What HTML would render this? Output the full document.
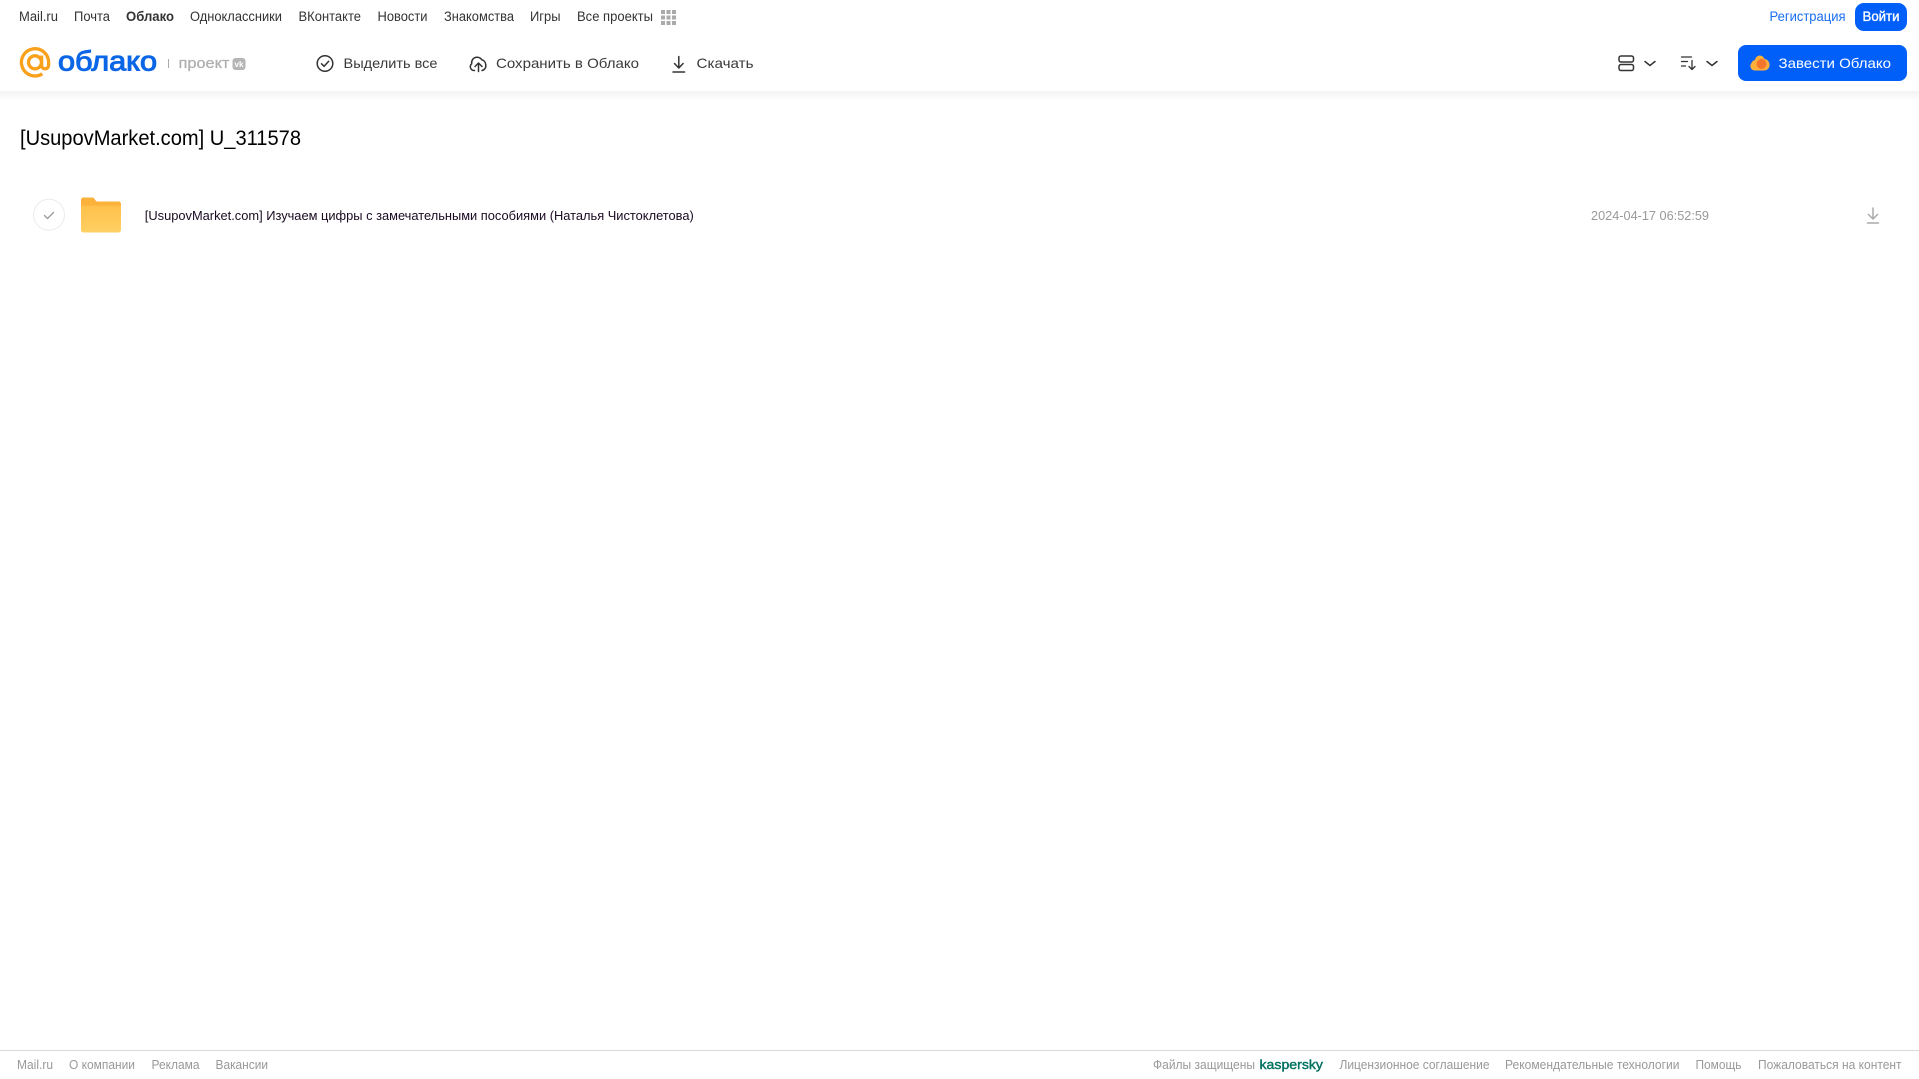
<!DOCTYPE html>
<html lang="ru">
<head>
<meta charset="utf-8">
<title>[UsupovMarket.com] U_311578</title>
<style>
html,body{margin:0;padding:0;background:#fff;width:1919px;height:1079px;overflow:hidden}
svg{display:block}
text{font-family:"Liberation Sans",sans-serif}
.n{font-size:13.500px;fill:#333}
.a{font-size:14px;fill:#3a3a3a}
.f{font-size:12.500px;fill:#999}
</style>
</head>
<body>
<svg width="1919" height="1079" viewBox="0 0 1919 1079" xmlns="http://www.w3.org/2000/svg">
<defs>
<linearGradient id="sh" x1="0" y1="0" x2="0" y2="1"><stop offset="0" stop-color="#f3f3f3"/><stop offset="1" stop-color="#fff"/></linearGradient>
<linearGradient id="fo" x1="0" y1="0" x2="0" y2="1"><stop offset="0" stop-color="#ffbb42"/><stop offset="1" stop-color="#ffd064"/></linearGradient>
</defs>
<rect x="0" y="91" width="1919" height="10" fill="url(#sh)"/>

<!-- top nav -->
<text class="n" x="19" y="21" textLength="39" lengthAdjust="spacingAndGlyphs">Mail.ru</text>
<text class="n" x="74" y="21" textLength="36" lengthAdjust="spacingAndGlyphs">Почта</text>
<text class="n" x="126" y="21" textLength="48" lengthAdjust="spacingAndGlyphs" font-weight="700">Облако</text>
<text class="n" x="190" y="21" textLength="92" lengthAdjust="spacingAndGlyphs">Одноклассники</text>
<text class="n" x="298.500" y="21" textLength="62.500" lengthAdjust="spacingAndGlyphs">ВКонтакте</text>
<text class="n" x="377.500" y="21" textLength="50" lengthAdjust="spacingAndGlyphs">Новости</text>
<text class="n" x="444" y="21" textLength="70" lengthAdjust="spacingAndGlyphs">Знакомства</text>
<text class="n" x="530" y="21" textLength="30.500" lengthAdjust="spacingAndGlyphs">Игры</text>
<text class="n" x="577" y="21" textLength="76" lengthAdjust="spacingAndGlyphs">Все проекты</text>
<g fill="#aaa">
<rect x="661" y="10" width="4" height="4"/><rect x="666.500" y="10" width="4" height="4"/><rect x="672" y="10" width="4" height="4"/>
<rect x="661" y="15.500" width="4" height="4"/><rect x="666.500" y="15.500" width="4" height="4"/><rect x="672" y="15.500" width="4" height="4"/>
<rect x="661" y="21" width="4" height="4"/><rect x="666.500" y="21" width="4" height="4"/><rect x="672" y="21" width="4" height="4"/>
</g>

<text class="n" x="1769.500" y="21" textLength="76" lengthAdjust="spacingAndGlyphs" style="fill:#1a6ff0">Регистрация</text>
<rect x="1855" y="3" width="52" height="28" rx="9" fill="#005ff9"/>
<text class="n" x="1862.500" y="21" textLength="37" lengthAdjust="spacingAndGlyphs" stroke="#fff" stroke-width=".35" style="fill:#fff">Войти</text>

<!-- logo -->
<g fill="none" stroke="#f9a11b" stroke-width="3.300">
<circle cx="35" cy="62.300" r="6.500"/>
<path d="M41.600 55.500v9.800a3.500 3.500 0 0 0 7 0V62.300a13.600 13.600 0 1 0-6.300 11.500"/>
</g>
<text x="58" y="70.500" font-size="28" fill="#0a66e6" stroke="#0a66e6" stroke-width="1" textLength="99" lengthAdjust="spacingAndGlyphs">облако</text>
<rect x="168" y="59" width="1" height="9" fill="#aaa"/>
<text x="178.500" y="68" font-size="15" fill="#b0b0b0" stroke="#b0b0b0" stroke-width=".3" textLength="51" lengthAdjust="spacingAndGlyphs">проект</text>
<rect x="232.500" y="58" width="13" height="12" rx="3" fill="#b5b5b5"/>
<text x="234.500" y="67" font-size="8" font-weight="700" fill="#fff" textLength="9" lengthAdjust="spacingAndGlyphs">vk</text>

<!-- actions -->
<g fill="none" stroke="#333" stroke-width="1.500" stroke-linecap="round" stroke-linejoin="round">
<circle cx="325" cy="63.500" r="7.800"/>
<path d="M321.500 63.800l2.600 2.500 4.600-5"/>
<path d="M474.500 70.500h-.5a3.800 3.800 0 0 1-2.300-6.700 5.500 5.500 0 0 1 4.500-6.500 6 6 0 0 1 5.800 2.600 5 5 0 0 1 3.700 4.600 4.800 4.800 0 0 1-3.700 6"/>
<path d="M478.500 71.500v-8M475 66.500l3.500-3.500 3.500 3.500"/>
<path d="M678.800 56.500v11M674.500 63.500l4.300 4.500 4.300-4.500"/>
<path d="M673 72h11.600"/>
</g>
<text class="a" x="343.500" y="68" textLength="94" lengthAdjust="spacingAndGlyphs">Выделить все</text>
<text class="a" x="496" y="68" textLength="143" lengthAdjust="spacingAndGlyphs">Сохранить в Облако</text>
<text class="a" x="696.500" y="68" textLength="57" lengthAdjust="spacingAndGlyphs">Скачать</text>

<!-- view / sort -->
<g fill="none" stroke="#333" stroke-width="1.500" stroke-linecap="round" stroke-linejoin="round">
<rect x="1619" y="56" width="14.500" height="6" rx="2"/>
<rect x="1619" y="64.500" width="14.500" height="6" rx="2"/>
<path d="M1645 61.500l5 4 5-4"/>
<path d="M1707 61.500l5 4 5-4"/>
<path d="M1681.500 57h10M1681.500 61.500h6M1681.500 66h4" stroke-width="1.300"/>
<path d="M1692 60.500v8.500M1689 66.500l3 3 3-3" stroke-width="1.300"/>
</g>

<!-- CTA button -->
<rect x="1738" y="45" width="169" height="36" rx="8" fill="#005ff9"/>
<path d="M1755 70.500a4.500 4.500 0 0 1-3.500-7.500 5 5 0 0 1 3.500-3 5.500 5.500 0 0 1 4.500-4.500 5.500 5.500 0 0 1 5 3.500 5.500 5.500 0 0 1 5 5.500 5.500 5.500 0 0 1-5.500 6z" fill="#ffb03a"/>
<circle cx="1761.500" cy="64" r="5" fill="#f5752c"/>
<text x="1778.500" y="68" font-size="14" fill="#fff" textLength="112.500" lengthAdjust="spacingAndGlyphs">Завести Облако</text>

<!-- title -->
<text x="20" y="145" font-size="21.500" fill="#000" textLength="281" lengthAdjust="spacingAndGlyphs">[UsupovMarket.com] U_311578</text>

<!-- row -->
<circle cx="49" cy="214.800" r="15.500" fill="#fff" stroke="#ececec" stroke-width="1"/>
<path d="M44.500 215.500l3 3 6-6" fill="none" stroke="#999" stroke-width="1.300" stroke-linecap="round" stroke-linejoin="round"/>
<path d="M81 200a2.500 2.500 0 0 1 2.500-2.500h8.500a3 3 0 0 1 2.500 1.500l1 1.500a2 2 0 0 0 2 1h21a2.500 2.500 0 0 1 2.500 2.500V230a2.500 2.500 0 0 1-2.500 2.500h-35a2.500 2.500 0 0 1-2.500-2.500z" fill="url(#fo)"/>
<path d="M81 200a2.500 2.500 0 0 1 2.500-2.500h8.500a3 3 0 0 1 2.500 1.500l1 1.500a2 2 0 0 0 2 1h21a2.500 2.500 0 0 1 2.500 2.500v1.500H81z" fill="#fbb13a"/>
<text x="144.800" y="220" font-size="13" fill="#1a0a22" textLength="549" lengthAdjust="spacingAndGlyphs">[UsupovMarket.com] Изучаем цифры с замечательными пособиями (Наталья Чистоклетова)</text>
<text x="1591" y="220" font-size="13" fill="#999" textLength="118" lengthAdjust="spacingAndGlyphs">2024-04-17 06:52:59</text>
<g fill="none" stroke="#aaa" stroke-width="1.500" stroke-linecap="round" stroke-linejoin="round">
<path d="M1873 208v11M1868.500 214.500l4.500 4.500 4.500-4.500"/>
<path d="M1867.500 223h11"/>
</g>

<!-- footer -->
<rect x="0" y="1050" width="1919" height="1" fill="#d9d9d9"/>
<text class="f" x="17" y="1069" textLength="36" lengthAdjust="spacingAndGlyphs">Mail.ru</text>
<text class="f" x="69" y="1069" textLength="66" lengthAdjust="spacingAndGlyphs">О компании</text>
<text class="f" x="151.500" y="1069" textLength="48" lengthAdjust="spacingAndGlyphs">Реклама</text>
<text class="f" x="215.500" y="1069" textLength="52.500" lengthAdjust="spacingAndGlyphs">Вакансии</text>
<text class="f" x="1153" y="1069" textLength="102" lengthAdjust="spacingAndGlyphs">Файлы защищены</text>
<text x="1259.500" y="1069" font-size="13" fill="#00705f" stroke="#00705f" stroke-width=".4" textLength="63.500" lengthAdjust="spacingAndGlyphs">kaspersky</text>
<text class="f" x="1339.500" y="1069" textLength="150" lengthAdjust="spacingAndGlyphs">Лицензионное соглашение</text>
<text class="f" x="1505" y="1069" textLength="174.500" lengthAdjust="spacingAndGlyphs">Рекомендательные технологии</text>
<text class="f" x="1695.500" y="1069" textLength="46" lengthAdjust="spacingAndGlyphs">Помощь</text>
<text class="f" x="1758" y="1069" textLength="143.500" lengthAdjust="spacingAndGlyphs">Пожаловаться на контент</text>
</svg>
</body>
</html>
